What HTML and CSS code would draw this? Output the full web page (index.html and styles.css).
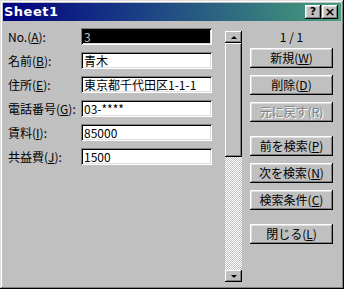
FILE: index.html
```html
<!DOCTYPE html>
<html lang="ja">
<head>
    <meta charset="UTF-8">
    <title>Sheet1</title>
    <link rel="stylesheet" href="styles.css">
</head>
<body>
    <div class="window">
        <div class="titlebar">
            <span class="title">Sheet1</span>
            <div class="title-buttons">
                <button class="tbtn">?</button>
                <button class="tbtn close">×</button>
            </div>
        </div>
        <div class="body">
            <div class="form">
                <div class="row"><label>No.(<u>A</u>):</label><div class="field selected">3</div></div>
                <div class="row"><label>名前(<u>B</u>):</label><div class="field">青木</div></div>
                <div class="row"><label>住所(<u>E</u>):</label><div class="field">東京都千代田区1-1-1</div></div>
                <div class="row"><label>電話番号(<u>G</u>):</label><div class="field">03-****</div></div>
                <div class="row"><label>賃料(<u>I</u>):</label><div class="field">85000</div></div>
                <div class="row"><label>共益費(<u>J</u>):</label><div class="field">1500</div></div>
            </div>
            <div class="scrollbar">
                <div class="arrow"><span class="tri up"></span></div>
                <div class="track"><div class="thumb"></div></div>
                <div class="arrow"><span class="tri down"></span></div>
            </div>
            <div class="actions">
                <div class="counter">1 / 1</div>
                <button class="btn">新規(<u>W</u>)</button>
                <button class="btn">削除(<u>D</u>)</button>
                <button class="btn disabled">元に戻す(R)</button>
                <button class="btn group">前を検索(<u>P</u>)</button>
                <button class="btn">次を検索(<u>N</u>)</button>
                <button class="btn">検索条件(<u>C</u>)</button>
                <button class="btn group">閉じる(<u>L</u>)</button>
            </div>
        </div>
    </div>
</body>
</html>
```

FILE: styles.css
```css
body, html {
    margin: 0;
    padding: 0;
    background-color: #c0c0c0;
}
.window {
    box-sizing: border-box;
    width: 344px;
    height: 289px;
    padding: 3px;
    background-color: #c0c0c0;
    box-shadow: inset -1px -1px #000, inset 1px 1px #dfdfdf, inset -2px -2px #808080, inset 2px 2px #fff;
    font-family: "Noto Sans CJK JP", sans-serif;
    font-size: 12px;
    color: #000;
}
.titlebar {
    height: 18px;
    display: flex;
    align-items: center;
    justify-content: space-between;
    padding: 0 3px 0 1px;
    background: linear-gradient(to right, #000080 0%, #1a3f85 40%, #48a07c 100%);
}
.title {
    font-family: "DejaVu Sans", sans-serif;
    font-weight: bold;
    font-size: 13px;
    letter-spacing: 0.5px;
    color: #fff;
    line-height: 18px;
}
.title-buttons {
    display: flex;
    gap: 1px;
}
.tbtn {
    width: 16px;
    height: 14px;
    padding: 0;
    border: none;
    background-color: #c0c0c0;
    box-shadow: inset -1px -1px #000, inset 1px 1px #fff, inset -2px -2px #808080, inset 2px 2px #dfdfdf;
    font-family: "DejaVu Sans", sans-serif;
    font-weight: bold;
    font-size: 11px;
    line-height: 14px;
    color: #000;
}
.tbtn.close {
    font-size: 13px;
}
.body {
    display: flex;
    padding: 7px 0 0 5px;
}
.form {
    display: flex;
    flex-direction: column;
    gap: 7px;
    width: 204px;
}
.row {
    display: flex;
    align-items: center;
    height: 17px;
}
.row label {
    width: 73px;
    line-height: 17px;
    white-space: nowrap;
}
.field {
    box-sizing: border-box;
    width: 131px;
    height: 17px;
    padding: 0 0 0 3px;
    background-color: #fff;
    box-shadow: inset 1px 1px #808080, inset -1px -1px #fff, inset 2px 2px #000, inset -2px -2px #dfdfdf;
    line-height: 17px;
    white-space: nowrap;
    overflow: hidden;
}
.field.selected {
    background-color: #000;
    color: #c0c0c0;
}
.scrollbar {
    display: flex;
    flex-direction: column;
    width: 17px;
    height: 251px;
    margin: 3px 0 0 13px;
}
.arrow {
    height: 12px;
    display: flex;
    align-items: center;
    justify-content: center;
    background-color: #c0c0c0;
    box-shadow: inset -1px -1px #000, inset 1px 1px #fff, inset -2px -2px #808080;
}
.tri {
    width: 0;
    height: 0;
    border-left: 3px solid transparent;
    border-right: 3px solid transparent;
}
.tri.up {
    border-bottom: 3px solid #000;
}
.tri.down {
    border-top: 3px solid #000;
}
.track {
    flex: 1;
    background-color: #fff;
    background-image: conic-gradient(#c0c0c0 90deg, #fff 90deg 180deg, #c0c0c0 180deg 270deg, #fff 270deg);
    background-size: 2px 2px;
}
.thumb {
    height: 114px;
    background-color: #c0c0c0;
    box-shadow: inset -1px -1px #000, inset 1px 1px #fff, inset -2px -2px #808080;
}
.actions {
    display: flex;
    flex-direction: column;
    gap: 7px;
    width: 83px;
    margin: 2px 0 0 8px;
}
.counter {
    height: 14px;
    line-height: 14px;
    text-align: center;
    margin-bottom: -3px;
}
.btn {
    height: 20px;
    padding: 0;
    border: none;
    background-color: #c0c0c0;
    box-shadow: inset -1px -1px #000, inset 1px 1px #fff, inset -2px -2px #808080, inset 2px 2px #dfdfdf;
    font-family: "Noto Sans CJK JP", sans-serif;
    font-size: 12px;
    line-height: 20px;
    color: #000;
}
.btn.group {
    margin-top: 7px;
}
.btn.disabled {
    color: #808080;
    text-shadow: 1px 1px #fff;
}
```
